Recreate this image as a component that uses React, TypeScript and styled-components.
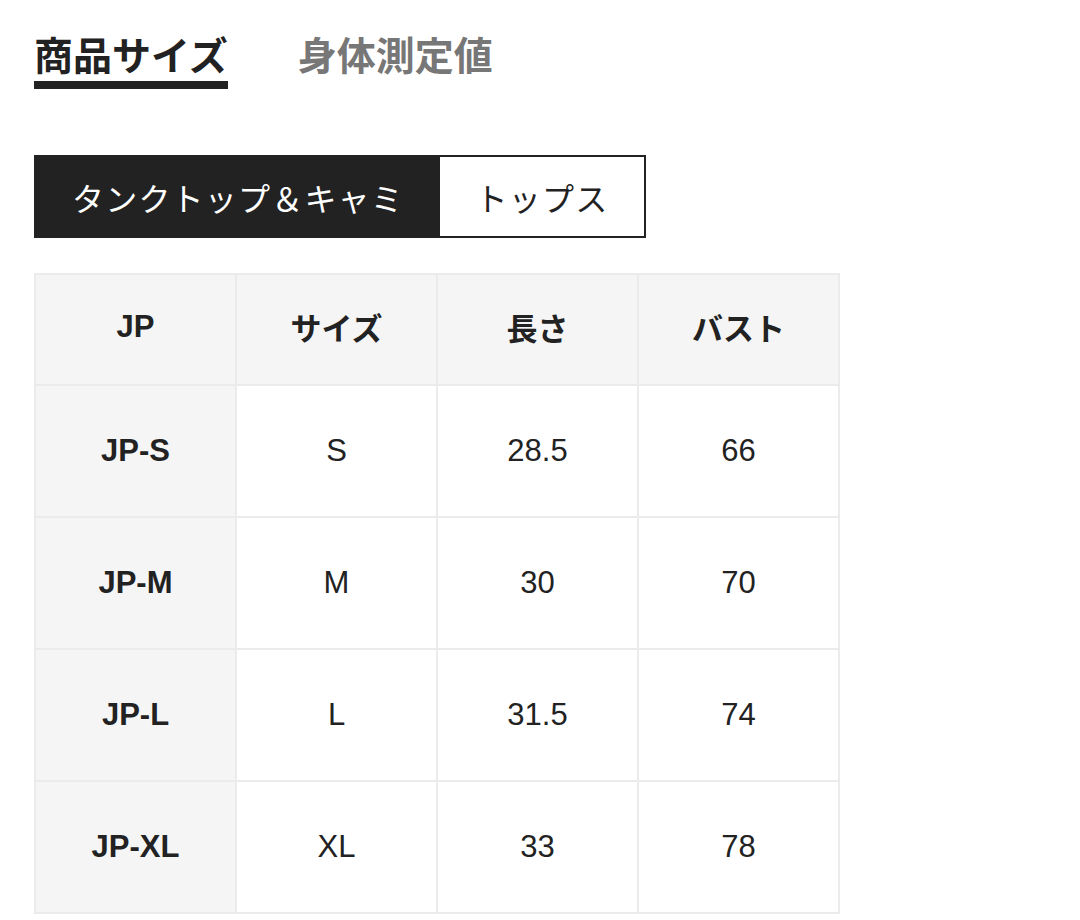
import React, { useState } from 'react';
import styled, { createGlobalStyle } from 'styled-components';

const GlobalStyle = createGlobalStyle`
  html, body {
    margin: 0;
    padding: 0;
    background: #ffffff;
  }
  body {
    font-family: "Liberation Sans", Arial, "Noto Sans CJK JP", sans-serif;
    color: #222222;
  }
`;

const Page = styled.div`
  padding: 30px 34px 0 34px;
`;

const TabBar = styled.div`
  display: flex;
  gap: 70px;
`;

const Tab = styled.button<{ $active: boolean }>`
  font-family: "Noto Sans CJK JP", sans-serif;
  font-size: 39px;
  font-weight: 700;
  line-height: 46px;
  padding: 0 0 5px 0;
  margin: 0;
  background: none;
  border: none;
  border-bottom: 8px solid ${(p) => (p.$active ? '#222222' : 'transparent')};
  color: ${(p) => (p.$active ? '#222222' : '#777777')};
  cursor: pointer;
`;

const Segment = styled.div`
  display: inline-flex;
  margin-top: 66px;
  border: 2px solid #222222;
  height: 79px;
`;

const SegmentItem = styled.button<{ $active: boolean; $width: number }>`
  width: ${(p) => p.$width}px;
  font-family: "Noto Sans CJK JP", sans-serif;
  font-size: 32px;
  font-weight: 400;
  border: none;
  margin: 0;
  padding: 0;
  background: ${(p) => (p.$active ? '#222222' : '#ffffff')};
  color: ${(p) => (p.$active ? '#ffffff' : '#222222')};
  cursor: pointer;
  letter-spacing: 1.2px;
`;

const Table = styled.table`
  margin-top: 35px;
  border-collapse: collapse;
  width: 806px;
  table-layout: fixed;
`;

const HeadCell = styled.th`
  height: 103px;
  background: #f5f5f5;
  border: 2px solid #ebebeb;
  font-family: "Liberation Sans", Arial, "Noto Sans CJK JP", sans-serif;
  font-size: 31px;
  font-weight: 700;
  text-align: center;
  padding: 0 0 6px 0;
  color: #222222;
`;

const Cell = styled.td<{ $label?: boolean }>`
  height: 130px;
  background: ${(p) => (p.$label ? '#f5f5f5' : '#ffffff')};
  border: 2px solid #ebebeb;
  font-size: 31px;
  font-weight: ${(p) => (p.$label ? 700 : 400)};
  text-align: center;
  padding: 0;
  color: #222222;
`;

const headers = ['JP', 'サイズ', '長さ', 'バスト'];

const rows = [
  ['JP-S', 'S', '28.5', '66'],
  ['JP-M', 'M', '30', '70'],
  ['JP-L', 'L', '31.5', '74'],
  ['JP-XL', 'XL', '33', '78'],
];

const App: React.FC = () => {
  const [tab, setTab] = useState(0);
  const [category, setCategory] = useState(0);

  return (
    <Page>
      <GlobalStyle />
      <TabBar>
        <Tab $active={tab === 0} onClick={() => setTab(0)}>商品サイズ</Tab>
        <Tab $active={tab === 1} onClick={() => setTab(1)}>身体測定値</Tab>
      </TabBar>

      <div>
        <Segment>
          <SegmentItem $width={404} $active={category === 0} onClick={() => setCategory(0)}>
            タンクトップ＆キャミ
          </SegmentItem>
          <SegmentItem $width={204} $active={category === 1} onClick={() => setCategory(1)}>
            トップス
          </SegmentItem>
        </Segment>
      </div>

      <Table>
        <thead>
          <tr>
            {headers.map((h) => (
              <HeadCell key={h}>{h}</HeadCell>
            ))}
          </tr>
        </thead>
        <tbody>
          {rows.map((r) => (
            <tr key={r[0]}>
              {r.map((v, i) => (
                <Cell key={i} $label={i === 0}>{v}</Cell>
              ))}
            </tr>
          ))}
        </tbody>
      </Table>
    </Page>
  );
};

export default App;
